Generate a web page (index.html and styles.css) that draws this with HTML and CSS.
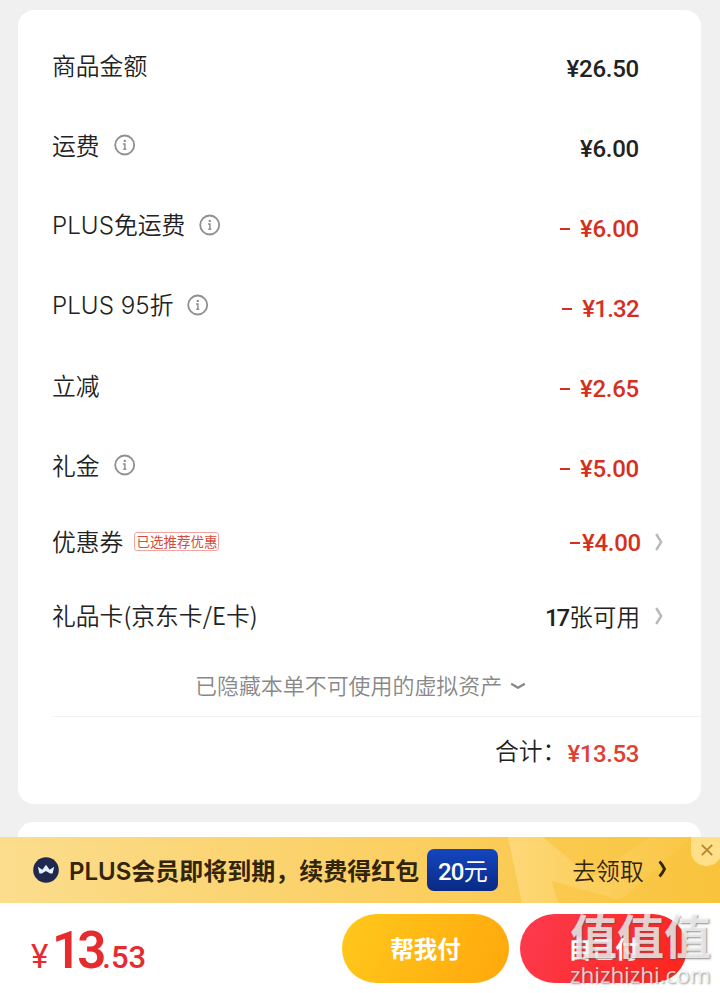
FILE: index.html
```html
<!DOCTYPE html>
<html lang="zh-CN">
<head>
<meta charset="utf-8">
<title>结算</title>
<link rel="stylesheet" href="styles.css">
</head>
<body>
<svg class="defs" width="0" height="0">
  <symbol id="info" viewBox="0 0 22 22">
    <circle cx="10.7" cy="11" r="9.5" fill="none" stroke="#8f8f8f" stroke-width="1.8"/>
    <circle cx="10.8" cy="6.9" r="1.2" fill="#8f8f8f"/>
    <path d="M9 9.9h1.9v5.3M9.3 15.2h3" fill="none" stroke="#8f8f8f" stroke-width="1.5"/>
  </symbol>
  <symbol id="chevron" viewBox="0 0 8 18">
    <path d="M1.2 1 6.2 9 1.2 17" fill="none" stroke="currentColor" stroke-width="2.4"/>
  </symbol>
</svg>
<main class="page">
  <section class="card">
    <div class="row"><span class="label">商品金额</span><span class="amount">¥26.50</span></div>
    <div class="row"><span class="label">运费</span><svg class="info"><use href="#info"/></svg><span class="amount">¥6.00</span></div>
    <div class="row"><span class="label"><span class="latin">PLUS</span>免运费</span><svg class="info"><use href="#info"/></svg><span class="amount red"><span class="minus"></span>¥6.00</span></div>
    <div class="row"><span class="label"><span class="latin">PLUS 95</span>折</span><svg class="info"><use href="#info"/></svg><span class="amount red narrow"><span class="minus"></span>¥1.32</span></div>
    <div class="row"><span class="label">立减</span><span class="amount red"><span class="minus"></span>¥2.65</span></div>
    <div class="row"><span class="label">礼金</span><svg class="info"><use href="#info"/></svg><span class="amount red"><span class="minus"></span>¥5.00</span></div>
    <div class="row coupon"><span class="label">优惠券</span><span class="tag">已选推荐优惠</span><span class="amount red"><span class="minus tight"></span>¥4.00</span><svg class="chevron"><use href="#chevron"/></svg></div>
    <div class="row giftcard"><span class="label">礼品卡(京东卡/E卡)</span><span class="available"><b>17</b>张可用</span><svg class="chevron"><use href="#chevron"/></svg></div>
    <div class="hidden-assets"><span>已隐藏本单不可使用的虚拟资产</span><svg class="down" viewBox="0 0 16 8"><path d="M1.2 1.8 8 5.8 14.8 1.8" fill="none" stroke="#888" stroke-width="2.2" stroke-linejoin="round"/></svg></div>
    <div class="total"><span class="total-label">合计：</span><span class="sum">¥13.53</span></div>
  </section>
  <section class="card next"></section>
  <aside class="banner">
    <svg class="mark" viewBox="0 0 212 66">
      <defs><linearGradient id="fade" x1="0" x2="1"><stop offset="0" stop-color="#ffdf8b"/><stop offset="1" stop-color="#ffd466" stop-opacity=".2"/></linearGradient></defs>
      <path d="M0 0H35L83 41 142 0H184L118 59Q110 65 101 60L44 44 50 66H14Z" fill="url(#fade)" opacity=".65"/>
    </svg>
    <svg class="badge" viewBox="0 0 26 26"><circle cx="13" cy="13" r="12.8" fill="#20284f"/><path d="M4.8 9.8 9.4 12.8 13 7.8 16.6 12.8 21.2 9.8 19.6 16.6H17.2L13 14 8.8 16.6H6.4Z" fill="#e7f0ff"/></svg>
    <span class="notice"><span class="latin">PLUS</span>会员即将到期，续费得红包</span>
    <span class="bonus"><b>20</b>元</span>
    <span class="claim">去领取</span>
    <svg class="go" viewBox="0 0 9 18"><path d="M1.5 1.5Q4 4 6.5 9 4 14 1.5 16.5" fill="none" stroke="#33240c" stroke-width="2.8"/></svg>
    <span class="close"><svg viewBox="0 0 12 12"><path d="M.8.8 11.2 11.2M11.2.8.8 11.2" stroke="#b58733" stroke-width="1.8"/></svg></span>
  </aside>
  <footer class="pay">
    <span class="price"><span class="yen">¥</span><span class="int">13</span><span class="dec">.53</span></span>
    <button class="btn yellow">帮我付</button>
    <button class="btn crimson">自己付</button>
    <div class="watermark"><div class="wm-name">值值值</div><div class="wm-url">zhizhizhi.com</div></div>
  </footer>
</main>
</body>
</html>
```
FILE: styles.css
```css
* { box-sizing: border-box; }
body { margin: 0; background: #f0f0f0; color: #222; font-family: "Noto Sans CJK SC", sans-serif; }
.defs { position: absolute; }
.page { width: 720px; height: 993px; padding-top: 10px; display: flex; flex-direction: column; overflow: hidden; }
.card { flex: none; width: 683px; height: 794px; margin-left: 18px; padding-top: 17px; border-radius: 16px; background: #fff; }
.next { height: 15px; margin-top: 18px; border-radius: 16px 16px 0 0; padding: 0; }
.row { display: flex; align-items: center; height: 80px; padding: 0 62px 0 34px; line-height: 36px; }
.label { margin-top: -4px; font-size: 23.8px; font-weight: 350; white-space: nowrap; }
.latin { font-family: Inter, sans-serif; font-weight: 350; font-size: 24.2px; }
.info { width: 22px; height: 22px; margin: -4px 0 0 14px; }
.amount { margin: 3px 0 0 auto; display: flex; align-items: center; font: 500 24px/36px Roboto, sans-serif; letter-spacing: -.25px; }
.narrow { letter-spacing: -.7px; }
.red { color: #d5301f; }
.minus { width: 10px; height: 2.4px; margin: 1px 10px 0 0; background: currentColor; }
.tight { margin-right: 2px; }
.coupon { height: 70px; padding-right: 38px; }
.coupon .amount { margin-top: 1px; }
.coupon .label { margin-top: -2px; }
.tag { height: 19px; margin: -2px 0 0 11px; padding: 0 1px; border: 1px solid #f0a69e; border-radius: 3px; color: #d84a39; font-size: 13.5px; line-height: 16px; white-space: nowrap; }
.chevron { width: 8px; height: 18px; margin: -1px 0 0 14px; color: #b9b9b9; }
.giftcard { padding-right: 38px; }
.available { margin: -2px 1px 0 auto; font-size: 23.6px; font-weight: 350; }
.available b { font: 500 24px Roboto, sans-serif; letter-spacing: -2px; margin-right: 1px; }
.giftcard .chevron { margin-top: -3px; }
.hidden-assets { display: flex; align-items: center; height: 59px; padding: 0 0 3px 177px; color: #888; font-size: 21.95px; font-weight: 350; line-height: 32px; white-space: nowrap; }
.down { width: 16px; height: 8px; margin: 1px 0 0 8px; }
.total { display: flex; align-items: center; justify-content: flex-end; height: 70px; margin-left: 34px; padding-right: 62px; border-top: 1px solid #f3f3f3; font-size: 23.8px; font-weight: 350; }
.total-label { margin-top: -4px; }
.sum { margin: 4px 0 0 1px; color: #df4034; font: 500 24px/36px Roboto, sans-serif; letter-spacing: -.4px; }
.banner { flex: none; position: relative; display: flex; align-items: center; height: 66px; padding-left: 33px; background: linear-gradient(90deg, #fbdd8d, #fbcf62 55%, #f9c43c); color: #33240c; overflow: hidden; }
.banner > * { flex: none; }
.mark { position: absolute; left: 508px; top: 0; width: 212px; height: 66px; }
.badge { width: 26px; height: 26px; position: relative; }
.notice { margin: -2px 0 0 10px; font-size: 24px; font-weight: 600; white-space: nowrap; }
.notice .latin { font-weight: 600; font-size: 24px; }
.bonus { width: 71px; height: 42px; margin-left: 8px; border-radius: 7px; background: linear-gradient(#1546c0, #092a85); color: #fff; font-size: 24px; line-height: 41px; text-align: center; }
.bonus b { font: 500 24px Roboto, sans-serif; letter-spacing: -.8px; }
.claim { position: relative; margin: -1px 0 0 74px; font-size: 23.8px; font-weight: 350; }
.go { position: relative; width: 9px; height: 18px; margin: -3px 0 0 14px; }
.close { position: absolute; right: -2px; top: 0; width: 31px; height: 29px; padding: 7px 0 0 10px; border-radius: 0 0 15px 15px; background: #ffdf87; line-height: 0; }
.close svg { width: 12px; height: 12px; }
.pay { flex: none; position: relative; display: flex; align-items: center; gap: 11px; height: 90px; padding-left: 31px; background: #fff; }
.price { display: flex; align-items: baseline; width: 300px; margin-top: 4px; color: #e62b2e; font-family: Roboto, sans-serif; }
.yen { width: 21px; font-size: 33px; }
.int { font-size: 51px; font-weight: 600; letter-spacing: -4px; }
.dec { font-size: 31px; font-weight: 500; }
.btn { flex: none; width: 167px; height: 69px; margin-top: 1px; padding: 0 0 2px; border: 0; border-radius: 35px; color: #fff; font: 700 23.5px "Noto Sans CJK SC", sans-serif; }
.yellow { background: linear-gradient(115deg, #ffc91b, #ffa70c); }
.crimson { background: linear-gradient(115deg, #fc3b50, #ff2419); }
.watermark { position: absolute; left: 570px; top: 4px; width: 150px; color: rgba(255,255,255,.76); text-shadow: 1px 1px 2px rgba(80,80,80,.65); white-space: nowrap; }
.wm-name { font-size: 47px; font-weight: 700; line-height: 54px; }
.wm-url { font: 22.4px/28px "Open Sans", sans-serif; }
```
